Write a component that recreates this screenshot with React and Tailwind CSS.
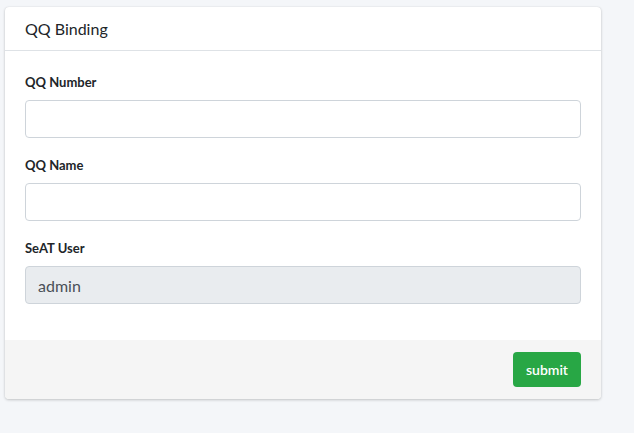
export default function App() {
    return (
        <div className="min-h-[433px] bg-[#f4f6f9] pt-[7px] pl-[5px]" style={{ fontFamily: "Lato, 'Noto Sans', sans-serif" }}>
            <div className="w-[596px] rounded-[4px] bg-white shadow-[0_0_1px_rgba(0,0,0,0.125),0_1px_3px_rgba(0,0,0,0.2)] overflow-hidden">
                <div className="h-[44px] px-5 flex items-center border-b border-[#dee2e6] text-[16px] text-[#212529]">
                    QQ Binding
                </div>
                <div className="px-5 pt-[21px] pb-5">
                    <div className="mb-[17px]">
                        <label className="block text-[13px] leading-[20px] font-bold text-[#212529] mb-2">QQ Number</label>
                        <input className="block w-full h-[38px] rounded-[4px] border border-[#ced4da] bg-white px-3 text-[16px] text-[#495057] outline-none" />
                    </div>
                    <div className="mb-[17px]">
                        <label className="block text-[13px] leading-[20px] font-bold text-[#212529] mb-2">QQ Name</label>
                        <input className="block w-full h-[38px] rounded-[4px] border border-[#ced4da] bg-white px-3 text-[16px] text-[#495057] outline-none" />
                    </div>
                    <div className="mb-4">
                        <label className="block text-[13px] leading-[20px] font-bold text-[#212529] mb-2">SeAT User</label>
                        <input
                            disabled
                            value="admin"
                            readOnly
                            className="block w-full h-[38px] rounded-[4px] border border-[#ced4da] bg-[#e9ecef] px-3 text-[16px] text-[#495057] outline-none"
                        />
                    </div>
                </div>
                <div className="bg-[#f5f5f5] px-5 py-3 flex justify-end">
                    <button className="h-[35px] px-[13px] rounded-[4px] bg-[#28a745] text-white text-[14px] font-semibold">
                        submit
                    </button>
                </div>
            </div>
        </div>
    );
}
